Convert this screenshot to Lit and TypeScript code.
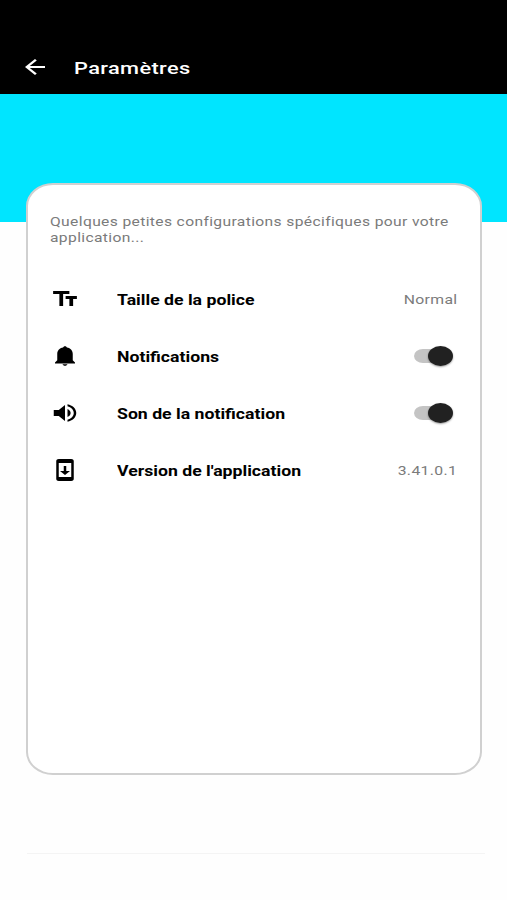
import { LitElement, html, css, svg } from "lit";
import { customElement, property } from "lit/decorators.js";

const ICONS: Record<string, string> = {
  back: "M20 11H7.83l5.59-5.59L12 4l-8 8 8 8 1.41-1.41L7.83 13H20v-2z",
  text: "M2.5 4v3h5v12h3V7h5V4h-13zm19 5h-9v3h3v7h3v-7h3V9z",
  bell: "M12 2.2c-.8 0-1.4.6-1.5 1.4C7.4 4.3 5.8 6.9 5.8 10v6.2L4 18.4v1h16v-1l-1.8-2.2V10c0-3.1-1.6-5.7-4.7-6.4-.1-.8-.7-1.4-1.5-1.4zM10 20.3c.2.9 1 1.5 2 1.5s1.8-.6 2-1.5h-4z",
  volume: "M3 9v6h4l5 5V4L7 9H3zm13.5 3c0-1.77-1.02-3.29-2.5-4.03v8.05c1.48-.73 2.5-2.25 2.5-4.02zM14 3.23v2.06c2.89.86 5 3.54 5 6.71s-2.11 5.85-5 6.71v2.06c4.01-.91 7-4.49 7-8.77s-2.99-7.86-7-8.77z",
  update: "M17 1.01L7 1c-1.1 0-2 .9-2 2v18c0 1.1.9 2 2 2h10c1.1 0 2-.9 2-2V3c0-1.1-.9-1.99-2-1.99zM17 19H7V5h10v14zm-1-6h-3V8h-2v5H8l4 4 4-4z",
};

@customElement("app-icon")
export class AppIcon extends LitElement {
  @property() name = "back";
  static styles = css`
    :host { display: block; width: 30px; height: 24px; flex: none; }
    svg { display: block; width: 100%; height: 100%; fill: currentColor; }
  `;
  render() {
    return html`<svg viewBox="0 0 24 24" preserveAspectRatio="none">${svg`<path d=${ICONS[this.name]} />`}</svg>`;
  }
}

@customElement("app-switch")
export class AppSwitch extends LitElement {
  static styles = css`
    :host { display: flex; align-items: center; justify-content: flex-end; width: 40px; height: 21px; margin-right: 4px; }
    .track { width: 34px; height: 14px; border-radius: 9px / 7px; background: #c4c4c4; margin-right: -20px; }
    .thumb { width: 25px; height: 20px; border-radius: 50%; background: #212121; box-shadow: 0 1px 2px rgba(0, 0, 0, 0.4); }
  `;
  render() {
    return html`<div class="track"></div><div class="thumb"></div>`;
  }
}

@customElement("app-root")
export class AppRoot extends LitElement {
  static styles = css`
    :host { display: block; height: 900px; background: #fefefe; font-family: Roboto, sans-serif; overflow: hidden; }
    .bar { height: 94px; box-sizing: border-box; padding: 40px 0 0 20px; background: #000; color: #fff; display: flex; align-items: center; }
    .title { margin-left: 24px; padding-top: 2px; font-size: 17px; font-weight: 500; letter-spacing: 0.3px; transform: scaleX(1.28); transform-origin: left; white-space: nowrap; }
    .banner { height: 128px; background: #00e5ff; }
    .card { position: relative; box-sizing: border-box; width: 456px; height: 592px; margin: -39px 0 0 26px; border: 2px solid #d0d0d0; border-radius: 27px / 23px; background: #fff; padding: 29px 23px 0 22px; }
    .intro { height: 56px; color: #7b7b7b; font-size: 13px; line-height: 15.5px; letter-spacing: 0.3px; }
    .intro div { width: max-content; transform: scaleX(1.202); transform-origin: left; }
    .row { height: 57px; display: flex; align-items: center; color: #000; }
    .label { margin-left: 37px; padding-top: 2px; font-size: 14px; font-weight: 700; transform: scaleX(1.262); transform-origin: left; white-space: nowrap; flex: 1; }
    .value { padding-top: 1px; color: #7b7b7b; font-size: 13px; letter-spacing: 0.3px; transform: scaleX(1.21); transform-origin: right; margin-right: -0.5px; }
    .rule { height: 1px; margin: 78px 22px 0 27px; background: #f4f4f4; }
  `;
  render() {
    return html`
      <header class="bar"><app-icon name="back"></app-icon><span class="title">Paramètres</span></header>
      <div class="banner"></div>
      <main class="card">
        <div class="intro">
          <div>Quelques petites configurations spécifiques pour votre</div>
          <div>application...</div>
        </div>
        <div class="row"><app-icon name="text"></app-icon><span class="label">Taille de la police</span><span class="value">Normal</span></div>
        <div class="row"><app-icon name="bell"></app-icon><span class="label">Notifications</span><app-switch></app-switch></div>
        <div class="row"><app-icon name="volume"></app-icon><span class="label">Son de la notification</span><app-switch></app-switch></div>
        <div class="row"><app-icon name="update"></app-icon><span class="label">Version de l'application</span><span class="value">3.41.0.1</span></div>
      </main>
      <div class="rule"></div>
    `;
  }
}
